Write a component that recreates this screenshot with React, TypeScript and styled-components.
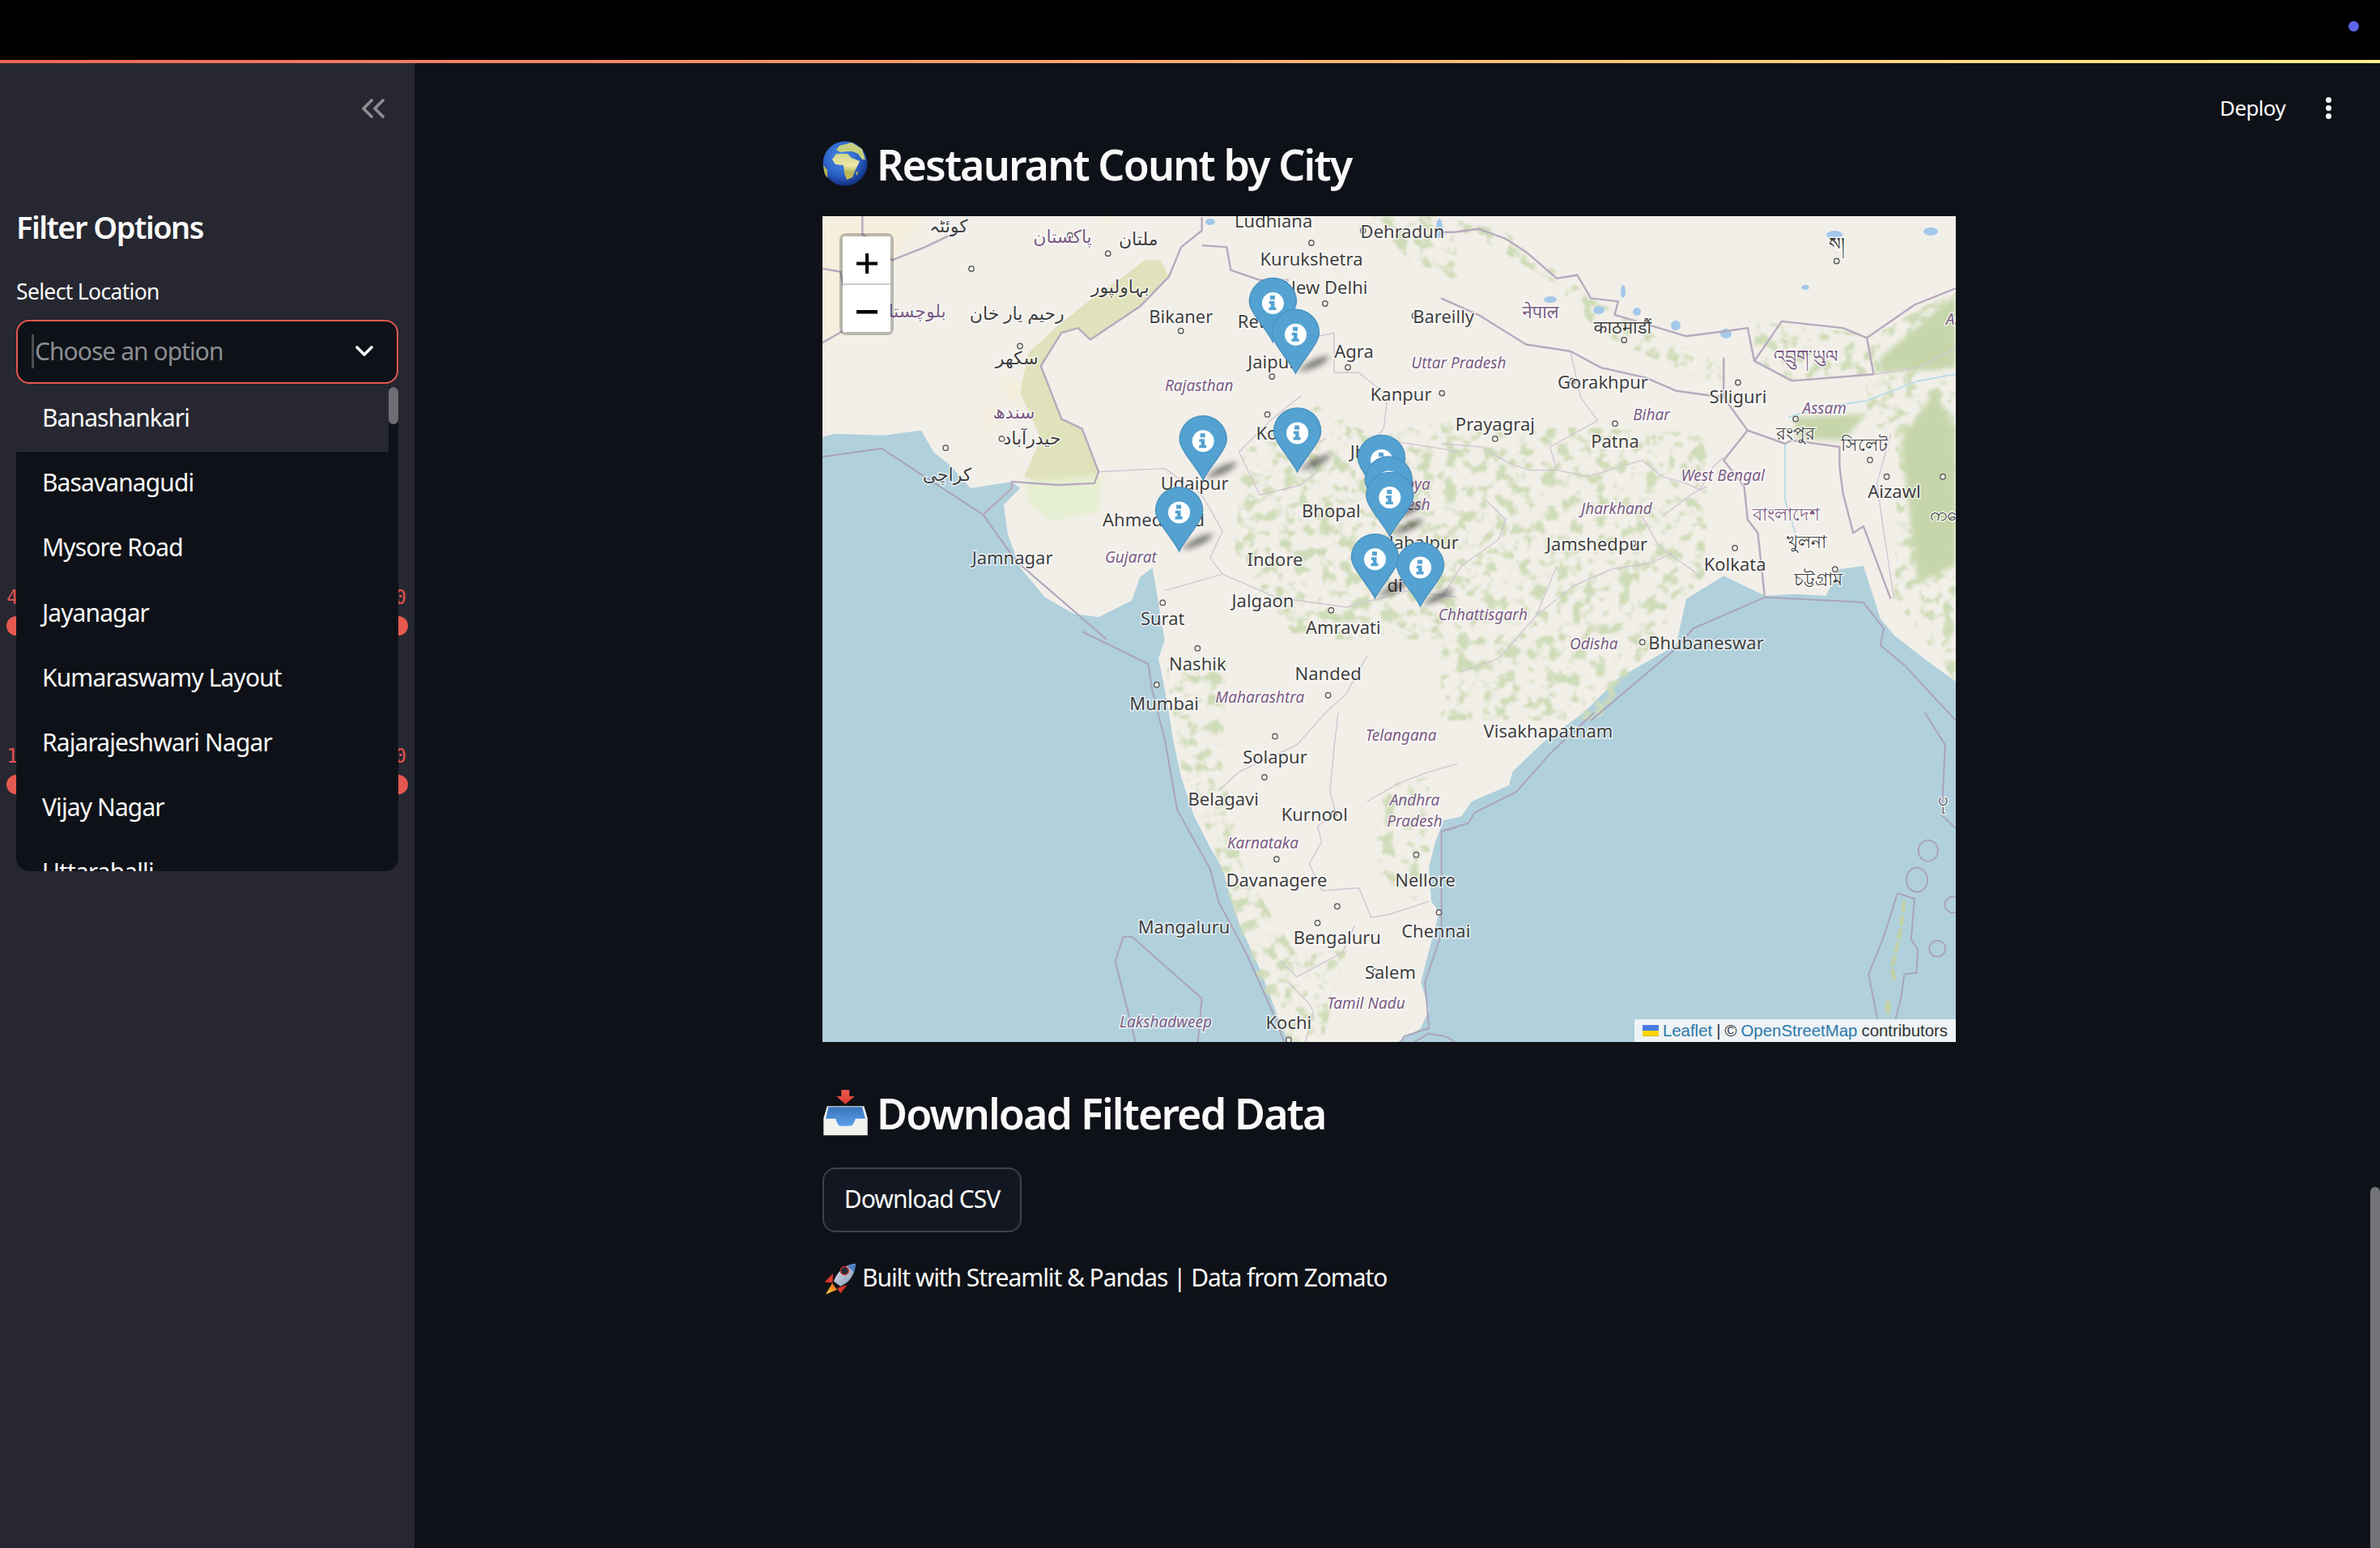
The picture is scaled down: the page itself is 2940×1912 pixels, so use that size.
import React from "react";
import styled, { createGlobalStyle } from "styled-components";

const UI = `"Noto Sans", "DejaVu Sans", sans-serif`;

const Global = createGlobalStyle`
  html, body { margin: 0; padding: 0; background: #0e1117; }
  body { height: 1912px; overflow: hidden; font-family: ${UI}; color: #fafafa; }
  * { box-sizing: border-box; }
`;

const Page = styled.div`display: flex; flex-direction: column; width: 2940px; height: 1912px;`;
const TopBar = styled.div`height: 74px; background: #000; display: flex; justify-content: flex-end; align-items: flex-start; padding: 26px 26px 0 0;`;
const StatusDot = styled.span`width: 13px; height: 13px; border-radius: 50%; background: #5f63e8;`;
const Decoration = styled.div`height: 4px; background: linear-gradient(90deg, #ee6658, #fdf08c);`;
const Body = styled.div`flex: 1; display: flex; min-height: 0;`;

const Sidebar = styled.aside`width: 512px; background: #262730; padding: 0 20px; display: flex; flex-direction: column;`;
const CollapseRow = styled.div`height: 112px; display: flex; justify-content: flex-end; align-items: center; padding: 0 16px 0 0;`;
const SideHeading = styled.h2`margin: 60px 0 0; font-size: 38px; line-height: 60px; font-weight: 600; letter-spacing: -0.04em; color: #fafafa;`;
const FieldLabel = styled.label`display: block; margin-top: 34px; font-size: 26.5px; line-height: 32px; letter-spacing: -0.025em; color: #fafafa;`;
const SelectWrap = styled.div`position: relative; margin-top: 19px;`;
const SelectBox = styled.div`height: 79px; background: #0e1117; border: 2.5px solid #e8574f; border-radius: 16px; display: flex; align-items: center; padding: 0 28px 2px 17px;`;
const Caret = styled.span`width: 3px; height: 42px; background: #4b4d53; margin-right: 1px;`;
const Placeholder = styled.span`flex: 1; font-size: 30px; letter-spacing: -0.032em; color: #8b8d91;`;
const Dropdown = styled.div`position: absolute; z-index: 2; left: 0; right: 0; top: 83px; height: 598px; background: #0e1117; border-radius: 4px 4px 16px 16px; overflow: hidden;`;
const Option = styled.div<{ $active?: boolean }>`
  height: 80.2px; width: 460px; padding: 0 0 5px 32px; display: flex; align-items: center;
  font-size: 30px; letter-spacing: -0.03em; color: #fafafa;
  background: ${(p) => (p.$active ? "#262730" : "transparent")};
`;
const DropScroll = styled.span`position: absolute; right: 0; top: 0; width: 12px; height: 46px; background: #6d6e73; border-radius: 6px;`;
const SliderBlock = styled.div<{ $top: number }>`margin: ${(p) => p.$top}px -12px 0; display: flex; flex-direction: column;`;
const SliderValues = styled.div`display: flex; justify-content: space-between; padding-right: 2px; font-family: "DejaVu Sans Mono", monospace; font-size: 24px; line-height: 30px; color: #e0524f;`;
const SliderThumbs = styled.div`margin-top: 8px; display: flex; justify-content: space-between;`;
const Thumb = styled.span`width: 24px; height: 24px; border-radius: 50%; background: #e5584f;`;

const Main = styled.main`position: relative; flex: 1; display: flex; justify-content: center; padding: 0 20px 0 0;`;
const Header = styled.div`position: absolute; top: 0; left: 0; right: 0; height: 110px; display: flex; justify-content: flex-end; align-items: center; gap: 50px; padding-right: 60px;`;
const Deploy = styled.span`font-size: 26px; letter-spacing: -0.025em; color: #fafafa;`;
const Kebab = styled.span`display: flex; flex-direction: column; gap: 3px;`;
const KebabDot = styled.span`width: 7px; height: 7px; border-radius: 50%; background: #fafafa;`;
const PageScroll = styled.span`position: absolute; right: 0; bottom: 0; width: 12px; height: 446px; border-radius: 6px 6px 0 0; background: #737478;`;
const Content = styled.div`width: 1400px; padding-top: 89px; display: flex; flex-direction: column;`;
const Heading = styled.h3<{ $top?: number }>`margin: ${(p) => p.$top ?? 0}px 0 0; height: 70px; display: flex; align-items: center; gap: 11px; font-size: 52px; font-weight: 600; letter-spacing: -0.036em; color: #fafafa;`;
const MapFrame = styled.div`position: relative; width: 1400px; height: 1020px; margin-top: 30px; overflow: hidden; background: #b0d0dc;`;
const MapCanvas = styled.svg`display: block; width: 1400px; height: 1020px;`;
const ZoomControl = styled.div`position: absolute; left: 21px; top: 21px; width: 67px; border: 4px solid rgba(0,0,0,0.24); border-radius: 8px; display: flex; flex-direction: column;`;
const ZoomButton = styled.div<{ $first?: boolean }>`height: ${(p) => (p.$first ? 58 : 60)}px; padding-top: 8px; background: #fff; display: flex; align-items: center; justify-content: center; border-top: ${(p) => (p.$first ? "none" : "2px solid #ccc")};`;
const Attribution = styled.div`position: absolute; right: 0; bottom: 0; height: 28px; padding: 0 10px; display: flex; align-items: center; gap: 5px; background: #eef3f6; font-family: "Liberation Sans", Arial, sans-serif; font-size: 20.4px; color: #333;`;
const AttrLink = styled.span`color: #2a78a8;`;
const DownloadBtn = styled.button`align-self: flex-start; margin-top: 33px; width: 246px; height: 80px; border: 2px solid #3f4148; border-radius: 16px; background: #131721; color: #fafafa; font-family: ${UI}; font-size: 30px; letter-spacing: -0.032em; padding: 0 0 3px;`;
const Footer = styled.p`margin: 34px 0 0; height: 48px; display: flex; align-items: center; gap: 7px; font-size: 30px; line-height: 40px; letter-spacing: -0.036em; color: #fafafa;`;
const FooterText = styled.span`position: relative; top: -2px;`;

const MapLabel = styled.text<{ $kind: "city" | "state" | "foreign" }>`
  font-family: "Noto Sans", "DejaVu Sans", "Noto Sans CJK SC", sans-serif;
  font-size: ${(p) => (p.$kind === "state" ? 19 : 22)}px;
  font-style: ${(p) => (p.$kind === "state" ? "italic" : "normal")};
  fill: ${(p) => (p.$kind === "city" ? "#3f3f3f" : "#7b5c85")};
  stroke: rgba(255,255,255,0.72);
  stroke-width: 3px;
  paint-order: stroke;
  text-anchor: middle;
  dominant-baseline: central;
`;

type Pt = (x: number, y: number) => [number, number];
const z3: Pt = (x, y) => [1000 + x / 1.96, 150 + y / 2.45];
const z4: Pt = (x, y) => [1780 + x / 2.376, 250 + y / 2.45];
const z5: Pt = (x, y) => [1000 + x / 1.96, 780 + y / 3];
const z6: Pt = (x, y) => [1780 + x / 2.376, 880 + y / 3];
const pts = (fn: Pt, s: string) =>
  s.trim().split(/\s+/).map((p) => { const [a, b] = p.split(",").map(Number); return fn(a, b).map((n) => n.toFixed(1)).join(","); }).join(" ");

const LAND = [
  pts(z3, "31,955 60,945 180,950 270,935 300,1000 340,1040 390,1110 490,1090 510,1110 470,1160 480,1250 510,1350 570,1440 640,1490 700,1500 780,1450 800,1380 830,1350 840,1420 850,1500 860,1568"),
  pts(z5, "845,100 860,215 870,300 880,400 900,540 930,680 970,800 1000,880 1015,960 1040,1080 1090,1250 1140,1450 1160,1525 1420,1525 1480,1470 1500,1400 1480,1300 1505,1150 1525,1040 1505,1000 1500,870 1515,780 1535,700"),
  pts(z6, "60,385 90,330 200,270 210,220 300,110 420,0"),
  pts(z4, "520,1440 690,1340 720,1200 830,1130 950,1190 1040,1185 1130,1190 1170,1110 1240,1100 1290,1260 1330,1310 1430,1390 1511,1450 1511,0 0,-100"),
  "1016,267",
].join(" ");

const MAIN_BORDERS: [Pt, string][] = [
  [z3, "950,290 950,330 900,380 870,470 800,560 680,660 650,625 610,640 560,740 610,900 660,930 700,1060 690,1095 600,1100 490,1090 490,1110 420,1190"],
  [z3, "128,287 128,340 200,420 280,380 380,320"],
  [z3, "31,445 75,455 100,620 31,670"],
  [z3, "950,375 1010,380 1020,450 1090,480 1160,480"],
  [z4, "0,90 40,90 110,80 190,110 250,150 340,230 400,220 440,290 520,300 510,340 640,380 720,405 830,390 900,380 920,480 1000,360 1180,380 1250,410 1390,310 1511,260"],
  [z4, "0,290 110,340 250,430 380,450 470,500 600,530 690,570 830,590 830,470"],
  [z4, "920,480 1030,540 1270,520 1250,410"],
  [z4, "830,590 900,690 1010,730 1030,720 1170,740 1170,800 1180,880 1210,1000 1240,980 1320,1200"],
  [z4, "900,690 830,780 890,860 900,960 930,1000 950,1190"],
];
const SEA_BORDERS: [Pt, string][] = [
  [z3, "31,1015 175,990 420,1190 500,1330 720,1568"],
  [z5, "660,0 820,120 830,220 860,400 890,660 970,880 990,1000 1060,1200 1130,1440 1150,1525"],
  [z5, "790,1525 740,1220 760,1130 780,1130 950,1360 940,1525"],
  [z5, "1568,725 1530,740 1530,1120 1490,1300 1500,1470 1440,1500 1430,1525"],
  [z5, "1460,1525 1500,1490 1540,1500 1568,1525"],
  [z6, "0,440 80,410 100,370 220,295 330,140 450,0"],
  [z4, "440,1568 690,1350 740,1290 950,1195 1240,1210 1300,1290 1290,1340 1360,1400 1511,1568"],
  [z6, "1420,0 1480,120 1470,380 1511,430"],
  [z6, "1340,670 1300,830 1255,970 1280,1130 1290,1225"],
  [z6, "1340,670 1390,690 1380,840 1400,880 1395,965 1360,970 1350,1060 1335,1130 1330,1225"],
];
const STATE_BORDERS: [Pt, string][] = [
  [z3, "1090,480 1190,660 1270,640 1270,760 1330,760 1400,830 1390,930 1370,960 1530,990 1568,1000"],
  [z3, "1190,830 1120,900 1040,1000 1090,1130 1190,1100 1230,1060 1200,990 1250,960"],
  [z3, "700,1060 860,1050 950,1130 1000,1240 970,1320 1000,1370 860,1420"],
  [z3, "1000,1370 1130,1440 1300,1470 1450,1420 1568,1440"],
  [z4, "0,730 120,740 200,790 260,810 340,810 430,830 590,780 650,830 720,850 760,870 800,800 830,770"],
  [z4, "380,450 410,590 460,660 320,740 340,810"],
  [z4, "590,950 640,1040 760,1130"],
  [z4, "130,900 190,960 170,1020 60,1100 0,1200"],
  [z4, "650,950 740,880 780,860"],
  [z4, "340,1100 280,1250 170,1380 60,1420"],
  [z4, "280,1250 390,1160 500,1110 620,1090 680,1060"],
  [z4, "1270,520 1400,500 1511,440"],
  [z4, "1320,700 1280,850 1300,1000 1330,1200"],
  [z5, "1350,90 1300,230 1250,300 1180,420 1040,520 990,590"],
  [z5, "1280,300 1270,430 1260,590 1275,680 1230,720 1240,780 1210,860 1240,960 1330,950 1360,1060 1400,1050 1500,1000"],
  [z5, "1350,630 1430,560 1500,520 1568,490"],
  [z5, "1140,1220 1180,1280 1290,1190 1320,1090"],
  [z5, "1160,1300 1210,1380 1220,1410 1200,1525"],
];

const FOREST: [Pt, string][] = [
  [z4, "0,60 150,130 340,250 470,400 640,480 830,560 820,480 640,410 520,340 340,210 190,90 0,40"],
  [z3, "1050,1000 1230,860 1360,950 1568,900 1568,1568 1180,1568 1030,1300"],
  [z4, "0,700 400,680 780,700 780,1120 700,1220 460,1568 0,1568"],
  [z5, "860,100 1010,100 1000,500 1050,880 1180,1200 1300,1180 1240,1525 1160,1525 1060,1200 980,800 900,500"],
  [z5, "1380,570 1500,540 1500,860 1470,1000 1370,900"],
  [z4, "920,360 1260,400 1270,520 1030,540 920,480"],
  [z4, "1240,420 1511,260 1511,1450 1330,1200 1340,800 1250,620"],
  [z3, "1360,287 1568,287 1568,480 1450,420"],
];
const SOLID_GREEN: [Pt, string][] = [
  [z4, "1040,650 1250,640 1180,720 1040,715"],
  [z4, "1290,470 1511,280 1511,500 1290,515"],
  [z4, "1350,720 1450,570 1511,700 1511,1100 1400,1150"],
];

const PLACES: [number, number, string, "city" | "state" | "foreign"][] = [
  [839, 145, "Ludhiana", "city"], [924, 152, "Dehradun", "city"], [864, 170, "Kurukshetra", "city"], [873, 189, "New Delhi", "city"],
  [951, 208, "Bareilly", "city"], [778, 208, "Bikaner", "city"], [834, 211, "Rewari", "city"], [838, 238, "Jaipur", "city"], [892, 231, "Agra", "city"],
  [961, 239, "Uttar Pradesh", "state"], [1056, 251, "Gorakhpur", "city"], [1145, 261, "Siliguri", "city"], [1088, 273, "Bihar", "state"], [1202, 269, "Assam", "state"],
  [923, 259, "Kanpur", "city"], [985, 279, "Prayagraj", "city"], [1064, 290, "Patna", "city"], [790, 254, "Rajasthan", "state"], [840, 285, "Kota", "city"],
  [1135, 313, "West Bengal", "state"], [1248, 323, "Aizawl", "city"], [906, 297, "Jhansi", "city"], [924, 319, "Madhya", "state"], [924, 332, "Pradesh", "state"], [787, 318, "Udaipur", "city"],
  [1065, 335, "Jharkhand", "state"], [877, 336, "Bhopal", "city"], [938, 357, "Jabalpur", "city"], [760, 342, "Ahmedabad", "city"], [1052, 358, "Jamshedpur", "city"],
  [667, 367, "Jamnagar", "city"], [745, 367, "Gujarat", "state"], [840, 368, "Indore", "city"], [919, 385, "di", "city"], [1143, 371, "Kolkata", "city"],
  [832, 395, "Jalgaon", "city"], [766, 407, "Surat", "city"], [885, 413, "Amravati", "city"], [977, 405, "Chhattisgarh", "state"], [1124, 423, "Bhubaneswar", "city"],
  [1050, 424, "Odisha", "state"], [789, 437, "Nashik", "city"], [875, 443, "Nanded", "city"], [767, 463, "Mumbai", "city"], [830, 459, "Maharashtra", "state"],
  [923, 484, "Telangana", "state"], [1020, 481, "Visakhapatnam", "city"], [840, 498, "Solapur", "city"], [806, 526, "Belagavi", "city"], [866, 536, "Kurnool", "city"],
  [932, 527, "Andhra", "state"], [932, 541, "Pradesh", "state"], [832, 555, "Karnataka", "state"], [841, 579, "Davanagere", "city"], [939, 579, "Nellore", "city"],
  [780, 610, "Mangaluru", "city"], [881, 617, "Bengaluru", "city"], [946, 613, "Chennai", "city"], [916, 640, "Salem", "city"], [900, 661, "Tamil Nadu", "state"],
  [768, 673, "Lakshadweep", "state"], [849, 673, "Kochi", "city"],
  [625, 148, "کوئٹہ", "city"], [700, 155, "پاکستان", "foreign"], [750, 157, "ملتان", "city"], [738, 188, "بہاولپور", "city"], [670, 206, "رحیم یار خان", "city"],
  [600, 204, "بلوچستان", "foreign"], [670, 235, "سکھر", "city"], [668, 271, "سندھ", "foreign"], [680, 288, "حیدرآباد", "city"], [624, 312, "کراچی", "city"],
  [1015, 205, "नेपाल", "foreign"], [1069, 215, "काठमाडौं", "city"], [1177, 338, "বাংলাদেশ", "foreign"], [1190, 356, "খুলনা", "city"], [1198, 381, "চট্টগ্রাম", "city"],
  [1183, 285, "রংপুর", "city"], [1228, 292, "সিলেট", "city"], [1190, 234, "འབྲུག་ཡུལ", "foreign"], [1210, 160, "ས།", "city"], [1280, 526, "ပု", "city"],
  [1305, 210, "Arunachal", "state"], [1287, 338, "ကလေး", "city"],
];

const DOTS: [number, number][] = [
  [898, 152], [864, 160], [873, 200], [932, 208], [778, 218], [838, 248], [888, 242], [950, 259], [1036, 251], [1145, 252], [985, 289], [1064, 279], [1183, 276],
  [1243, 314], [1232, 303], [1076, 358], [1143, 361], [1209, 375], [1082, 423], [766, 397], [877, 402], [789, 427], [875, 458], [762, 451], [840, 485], [833, 512],
  [879, 536], [841, 566], [933, 563], [868, 608], [881, 597], [948, 601], [906, 640], [849, 685], [1070, 224], [672, 228], [660, 289], [623, 295], [705, 155], [640, 177], [730, 167],
  [835, 273], [790, 308], [1280, 314], [1210, 172],
];

const PINS: [number, number][] = [
  [1572.4, 374.5], [1600.5, 413.3], [1602.6, 534.9], [1486.2, 544.7], [1456.6, 632.9], [1706.6, 568.4], [1715.3, 595], [1716.8, 614.5], [1698.5, 690.8], [1754.6, 701],
];

const Globe = () => (
  <svg width="56" height="56" viewBox="0 0 56 56">
    <defs>
      <radialGradient id="gSea" cx="0.42" cy="0.36" r="0.68">
        <stop offset="0" stopColor="#4b8fe8" /><stop offset="0.62" stopColor="#2a5fc4" /><stop offset="1" stopColor="#0f2a78" />
      </radialGradient>
      <linearGradient id="gLand" x1="0" y1="0" x2="0" y2="1">
        <stop offset="0" stopColor="#cfd68a" /><stop offset="0.45" stopColor="#efe8a8" /><stop offset="0.7" stopColor="#b6b85a" /><stop offset="1" stopColor="#c8b84e" />
      </linearGradient>
    </defs>
    <circle cx="28" cy="28" r="27.500" fill="url(#gSea)" />
    <path d="M12 23 17 16 31 16 36 21 46 25 41 35 37 45 30 48 27 40 26 30 16 29Z" fill="url(#gLand)" />
    <path d="M17 11 21 6 36 2 49 10 53 23 49 23 44 16 37 13 31 13 22 14Z" fill="#c7cf7e" />
    <path d="M1 30 6 36 6 46 2.500 40Z" fill="#b9b457" />
    <path d="M41 40 44 37 43 43Z" fill="#c3bb5b" />
  </svg>
);
const Inbox = () => (
  <svg width="56" height="57" viewBox="0 0 56 57">
    <defs>
      <linearGradient id="iBlue" x1="0" y1="0" x2="0" y2="1"><stop offset="0" stopColor="#3a74bc" /><stop offset="1" stopColor="#5aa0ea" /></linearGradient>
      <linearGradient id="iRed" x1="0" y1="0" x2="0" y2="1"><stop offset="0" stopColor="#ee5a4c" /><stop offset="1" stopColor="#d8382e" /></linearGradient>
    </defs>
    <path d="M23.300 0.300h10V8h6.400L28.300 18 17.300 8h6Z" fill="url(#iRed)" />
    <path d="M5.700 20.300h45.600L55.700 35v21.300H1.300V35Z" fill="#f1f1ee" />
    <path d="M7.300 21.300H49L53 35.700H40.700Q38 44.700 34 44.700H22.300Q19 44.700 16.300 35.700H4Z" fill="url(#iBlue)" />
  </svg>
);
const Rocket = () => (
  <svg width="42" height="40" viewBox="0 0 42 40">
    <defs>
      <linearGradient id="rBody" x1="0" y1="0" x2="1" y2="1"><stop offset="0" stopColor="#e4e8f0" /><stop offset="1" stopColor="#7f92b4" /></linearGradient>
      <linearGradient id="rFlame" x1="1" y1="0" x2="0" y2="1"><stop offset="0" stopColor="#e8531f" /><stop offset="0.6" stopColor="#f5a623" /><stop offset="1" stopColor="#f8e27a" /></linearGradient>
    </defs>
    <path d="M13 13 2.500 23.500 12.500 24.500Z" fill="#d8382c" />
    <path d="M30.700 27 22.300 37.500 18 31Z" fill="#d8382c" />
    <path d="M12 25 4 38.700 18 33Z" fill="url(#rFlame)" />
    <path d="M40.700 1C30.700 1.300 20.700 7 14.700 20.300L14 22.700 22.300 28.700 25.700 27C35.700 22 40.700 10.300 40.700 1Z" fill="url(#rBody)" />
    <path d="M40.700 1C37 1.200 33.500 2 30.500 3.500L38.500 11C40 7.500 40.700 4 40.700 1Z" fill="#4a7fc4" />
    <circle cx="27.300" cy="9.500" r="4.800" fill="#1f2a3c" stroke="#b3332c" strokeWidth="1.800" />
  </svg>
);

const DoubleLeft = () => (
  <svg width="30" height="24" viewBox="0 0 30 24" fill="none" stroke="#8c8d92" strokeWidth="3.800" strokeLinecap="round" strokeLinejoin="round">
    <path d="M13 2 3 12l10 10M27 2 17 12l10 10" />
  </svg>
);
const ChevronDown = () => (
  <svg width="24" height="16" viewBox="0 0 24 16" fill="none" stroke="#fafafa" strokeWidth="3.600" strokeLinecap="round" strokeLinejoin="round">
    <path d="M3 3l9 9 9-9" />
  </svg>
);
const Plus = () => (
  <svg width="26" height="25" viewBox="0 0 26 25"><path d="M11 0h4v10.500h11v4H15V25h-4V14.500H0v-4h11Z" fill="#000" /></svg>
);
const Minus = () => (
  <svg width="26" height="6" viewBox="0 0 26 6"><rect width="26" height="4.500" y="1" fill="#000" /></svg>
);
const UkraineFlag = () => (
  <svg width="20" height="14" viewBox="0 0 20 14"><rect width="20" height="7" fill="#4c7be1" /><rect y="7" width="20" height="6" fill="#ffd500" /><rect y="13" width="20" height="1" fill="#e0bc00" /></svg>
);

const Pin = ({ x, y }: { x: number; y: number }) => (
  <g transform={`translate(${x} ${y})`}>
    <path d="M0 48C-7 33-29 11-29-2A29 29 0 1 1 29-2C29 11 7 33 0 48Z" fill="#53a2d1" stroke="#4b93c0" strokeWidth="1.500" />
    <circle cx="0" cy="0" r="13.500" fill="#fff" />
    <path d="M-3.500-9.500h6v5h-6ZM-4.500-2.500h6.500v7.500h2v3.500h-9V5h2.500V1h-2.500Z" fill="#53a2d1" />
  </g>
);
const PinShadow = ({ x, y }: { x: number; y: number }) => (
  <path transform={`translate(${x} ${y})`} d="M2 46C12 38 22 28 42 26 38 36 20 44 2 46Z" fill="#000" opacity="0.5" filter="url(#soft4)" />
);

const MapDrawing = () => (
  <MapCanvas viewBox="1016 267 1400 1020">
    <defs>
      <filter id="mottle" filterUnits="userSpaceOnUse" x="1016" y="267" width="1400" height="1020">
        <feTurbulence type="fractalNoise" baseFrequency="0.065" numOctaves="4" seed="11" result="n" />
        <feColorMatrix in="n" type="matrix" values="0 0 0 0 0 0 0 0 0 0 0 0 0 0 0 6 0 0 0 -3" result="a" />
        <feComposite in="SourceGraphic" in2="a" operator="in" />
        <feGaussianBlur stdDeviation="1" />
      </filter>
      <filter id="soft1"><feGaussianBlur stdDeviation="0.6" /></filter>
      <filter id="soft3"><feGaussianBlur stdDeviation="3" /></filter>
      <filter id="soft4" x="-50%" y="-50%" width="200%" height="200%"><feGaussianBlur stdDeviation="3.500" /></filter>
      <filter id="soft8" filterUnits="userSpaceOnUse" x="1016" y="267" width="1400" height="1020"><feGaussianBlur stdDeviation="7" /></filter>
    </defs>
    <rect x="1016" y="267" width="1400" height="1020" fill="#b0d0dc" />
    <polygon points={LAND} fill="#f2efe9" filter="url(#soft1)" />
    <g filter="url(#soft8)">
      <polygon points={pts(z3, "31,287 280,287 200,420 75,460 100,640 31,670")} fill="#f6efdc" />
      <polygon points={pts(z3, "700,287 750,287 715,340")} fill="#f6efdc" />
      <polygon points={pts(z3, "460,770 520,800 510,880 460,810")} fill="#f6efdc" />
      <polygon points={pts(z3, "415,850 450,860 450,950 425,940")} fill="#f6efdc" />
    </g>
    <polygon points={pts(z3, "850,420 870,470 800,560 680,660 650,625 610,640 560,740 610,900 660,930 700,1060 690,1095 570,1100 520,1075 560,960 510,820 530,700 600,620 680,540 760,470 810,420")} fill="#dfe2bb" filter="url(#soft1)" />
    <polygon points={pts(z3, "520,1090 710,1070 700,1180 590,1210 530,1160")} fill="#e6efd2" filter="url(#soft3)" />
    <g fill="#cfdcb8" filter="url(#mottle)">
      {FOREST.map(([fn, s], i) => <polygon key={i} points={pts(fn, s)} />)}
    </g>
    <g fill="#c6d6aa" filter="url(#soft3)">
      {SOLID_GREEN.map(([fn, s], i) => <polygon key={i} points={pts(fn, s)} />)}
    </g>
    <g fill="none" stroke="#bcdce8" strokeWidth="2" filter="url(#soft1)">
      <polyline points={pts(z4, "1020,650 1120,620 1250,600 1400,540 1511,520")} />
      <polyline points={pts(z4, "1010,730 1010,900 1040,1000")} />
    </g>
    <g fill="#a4c8ea" filter="url(#soft1)">
      <ellipse cx="1915" cy="370" rx="8" ry="4" /><ellipse cx="1975" cy="383" rx="7" ry="5" /><ellipse cx="2022" cy="385" rx="5" ry="5" />
      <ellipse cx="2070" cy="402" rx="6" ry="6" /><ellipse cx="2132" cy="412" rx="7" ry="6" /><ellipse cx="2005" cy="360" rx="3" ry="8" />
      <ellipse cx="2385" cy="286" rx="9" ry="5" /><ellipse cx="2230" cy="355" rx="5" ry="3" /><ellipse cx="1495" cy="274" rx="6" ry="4" />
      <ellipse cx="1778" cy="282" rx="4" ry="12" /><ellipse cx="2266" cy="290" rx="10" ry="5" />
    </g>
    <g fill="none" stroke="#cfc7d2" strokeWidth="1.400" strokeLinejoin="round" filter="url(#soft1)">
      {STATE_BORDERS.map(([fn, s], i) => <polyline key={i} points={pts(fn, s)} />)}
    </g>
    <g fill="none" stroke="#aaa4ba" strokeWidth="2" strokeLinejoin="round" filter="url(#soft1)">
      {SEA_BORDERS.map(([fn, s], i) => <polyline key={i} points={pts(fn, s)} />)}
      <ellipse cx={z6(1430, 512)[0]} cy={z6(1430, 512)[1]} rx="12" ry="13" />
      <ellipse cx={z6(1397, 620)[0]} cy={z6(1397, 620)[1]} rx="13" ry="15" />
      <ellipse cx={z6(1505, 712)[0]} cy={z6(1505, 712)[1]} rx="11" ry="10" />
      <ellipse cx={z6(1457, 875)[0]} cy={z6(1457, 875)[1]} rx="10" ry="10" />
    </g>
    <g fill="none" stroke="#b7aabd" strokeWidth="2.400" strokeLinejoin="round" filter="url(#soft1)">
      {MAIN_BORDERS.map(([fn, s], i) => <polyline key={i} points={pts(fn, s)} />)}
    </g>
    <polyline points={pts(z6, "1360,700 1350,800 1325,940 1330,1000")} fill="none" stroke="#bfd0a8" strokeWidth="5" strokeDasharray="14 3" />
    <ellipse cx={z6(1312, 1092)[0]} cy={z6(1312, 1092)[1]} rx="4" ry="9" fill="#bfd0a8" />
    <g fill="#f4f2ec" stroke="#5f5f5f" strokeWidth="1.400">
      {DOTS.map(([x, y], i) => <circle key={i} cx={x * 1.875} cy={y * 1.875} r="3.200" />)}
    </g>
    {PLACES.map(([x, y, t, k], i) => (
      <MapLabel key={i} $kind={k} x={x * 1.875} y={y * 1.875}>{t}</MapLabel>
    ))}
    {PINS.map(([x, y], i) => <PinShadow key={i} x={x} y={y} />)}
    {PINS.map(([x, y], i) => <Pin key={i} x={x} y={y} />)}
  </MapCanvas>
);

const LOCATIONS = ["Banashankari", "Basavanagudi", "Mysore Road", "Jayanagar", "Kumaraswamy Layout", "Rajarajeshwari Nagar", "Vijay Nagar", "Uttarahalli"];

export default function App() {
  return (
    <Page>
      <Global />
      <TopBar><StatusDot /></TopBar>
      <Decoration />
      <Body>
        <Sidebar>
          <CollapseRow><DoubleLeft /></CollapseRow>
          <SideHeading>Filter Options</SideHeading>
          <FieldLabel>Select Location</FieldLabel>
          <SelectWrap>
            <SelectBox>
              <Caret />
              <Placeholder>Choose an option</Placeholder>
              <ChevronDown />
            </SelectBox>
            <Dropdown>
              {LOCATIONS.map((l, i) => <Option key={l} $active={i === 0}>{l}</Option>)}
              <DropScroll />
            </Dropdown>
          </SelectWrap>
          <SliderBlock $top={249}>
            <SliderValues><span>4.0</span><span>5.0</span></SliderValues>
            <SliderThumbs><Thumb /><Thumb /></SliderThumbs>
          </SliderBlock>
          <SliderBlock $top={134}>
            <SliderValues><span>100</span><span>6000</span></SliderValues>
            <SliderThumbs><Thumb /><Thumb /></SliderThumbs>
          </SliderBlock>
        </Sidebar>
        <Main>
          <Header>
            <Deploy>Deploy</Deploy>
            <Kebab><KebabDot /><KebabDot /><KebabDot /></Kebab>
          </Header>
          <Content>
            <Heading><Globe />Restaurant Count by City</Heading>
            <MapFrame>
              <MapDrawing />
              <ZoomControl>
                <ZoomButton $first><Plus /></ZoomButton>
                <ZoomButton><Minus /></ZoomButton>
              </ZoomControl>
              <Attribution>
                <UkraineFlag />
                <AttrLink>Leaflet</AttrLink>
                <span>|</span>
                <span>©</span>
                <AttrLink>OpenStreetMap</AttrLink>
                <span>contributors</span>
              </Attribution>
            </MapFrame>
            <Heading $top={52}><Inbox />Download Filtered Data</Heading>
            <DownloadBtn>Download CSV</DownloadBtn>
            <Footer><Rocket /><FooterText>Built with Streamlit &amp; Pandas | Data from Zomato</FooterText></Footer>
          </Content>
          <PageScroll />
        </Main>
      </Body>
    </Page>
  );
}
